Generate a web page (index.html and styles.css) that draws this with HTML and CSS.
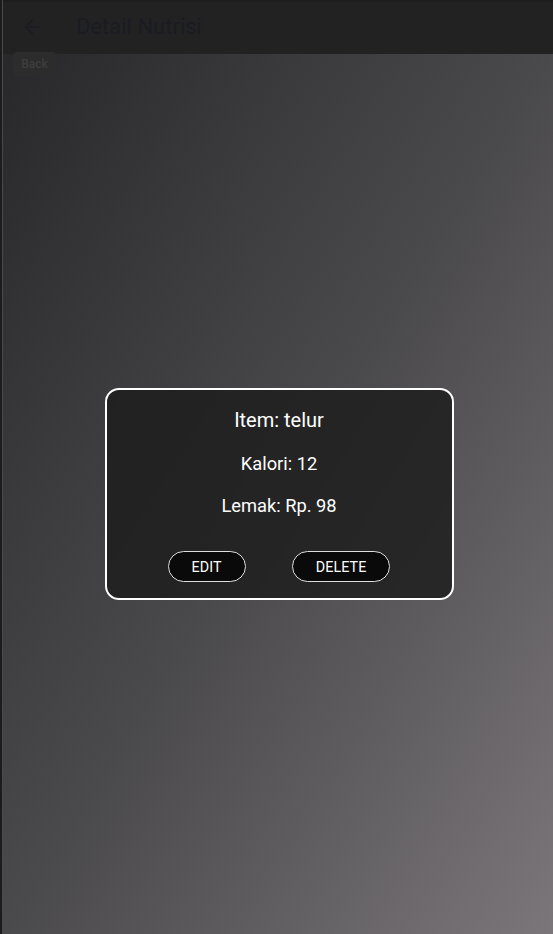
FILE: index.html
```html
<!DOCTYPE html>
<html lang="id">
<head>
<meta charset="utf-8">
<title>Detail Nutrisi</title>
<link rel="stylesheet" href="styles.css">
</head>
<body>
<div class="app">
  <header class="appbar">
    <span class="back-icon">
      <svg width="24" height="24" viewBox="0 0 24 24"><path d="M20 11H7.83l5.59-5.59L12 4l-8 8 8 8 1.41-1.41L7.83 13H20v-2z" fill="#1c1c22"/></svg>
    </span>
    <h1 class="title">Detail Nutrisi</h1>
  </header>
  <button class="back-btn">Back</button>
  <main class="content">
    <section class="card">
      <h2 class="item">Item: telur</h2>
      <p class="line kalori">Kalori: 12</p>
      <p class="line lemak">Lemak: Rp. 98</p>
      <div class="actions">
        <button class="pill">EDIT</button>
        <button class="pill">DELETE</button>
      </div>
    </section>
  </main>
</div>
</body>
</html>
```

FILE: styles.css
```css
html, body {
  margin: 0;
  padding: 0;
  height: 100%;
}
body {
  background: #1c1c1c;
  font-family: Roboto, "Noto Sans", sans-serif;
  overflow: hidden;
}
.app {
  position: relative;
  margin-left: 2px;
  border-left: 1px solid #4a4a4a;
  height: 934px;
  display: flex;
  flex-direction: column;
}
.appbar {
  height: 54px;
  flex: 0 0 54px;
  background: #222222;
  border-top: 2px solid #1d1d1d;
  box-sizing: border-box;
  display: flex;
  align-items: center;
  padding-left: 17px;
  padding-bottom: 3px;
}
.back-icon {
  width: 24px;
  height: 24px;
  display: flex;
}
.title {
  margin: 0 0 0 32px;
  font-size: 22px;
  font-weight: 400;
  color: #1b1b22;
  letter-spacing: 0;
}
.back-btn {
  position: absolute;
  left: 10px;
  top: 52px;
  width: 43px;
  height: 24px;
  border: none;
  border-radius: 4px;
  background: #2c2c2c;
  color: #3e3e3e;
  font-family: Roboto, sans-serif;
  font-size: 12px;
  font-weight: 500;
  padding: 0;
  z-index: 2;
}
.content {
  flex: 1;
  background: linear-gradient(to bottom right, #28272a 0%, #4a494b 50%, #7b7679 100%);
  display: flex;
  align-items: center;
  justify-content: center;
  padding-left: 2px;
}
.card {
  width: 349px;
  box-sizing: border-box;
  border: 2px solid #ffffff;
  border-radius: 14px;
  background: rgba(28, 28, 28, 0.82);
  padding: 18px 0 16px;
  text-align: center;
  color: #ffffff;
}
.item {
  margin: 0 0 21px;
  font-size: 20px;
  line-height: 24px;
  font-weight: 400;
}
.line {
  margin: 0;
  font-size: 18.3px;
  line-height: 22px;
}
.kalori {
  margin-bottom: 20px;
}
.actions {
  margin-top: 34px;
  display: flex;
  justify-content: center;
  gap: 46px;
}
.pill {
  height: 31px;
  padding: 0 23px;
  border: 1px solid #dedede;
  border-radius: 16px;
  background: #0a0a0a;
  color: #ffffff;
  font-family: Roboto, sans-serif;
  font-size: 14.3px;
  font-weight: 400;
  letter-spacing: 0.1px;
}
```
